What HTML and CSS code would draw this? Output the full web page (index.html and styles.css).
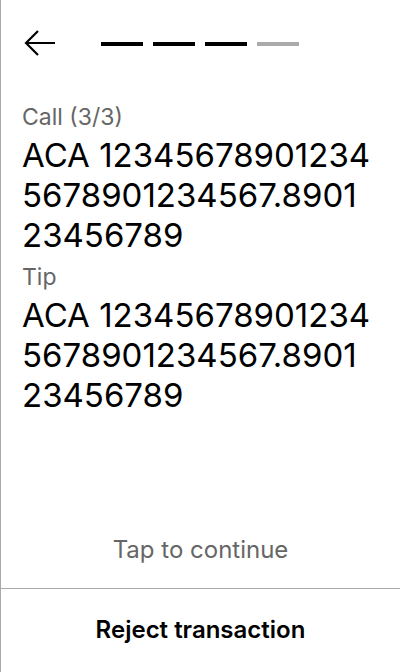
FILE: index.html
```html
<!DOCTYPE html>
<html>
<head>
<meta charset="utf-8">
<link rel="stylesheet" href="styles.css">
</head>
<body>
<div class="screen">
  <div class="header">
    <svg class="back" width="34" height="30" viewBox="0 0 34 30">
      <path d="M32 14H3M15 2L3 14L15 26" fill="none" stroke="#000" stroke-width="2.2"/>
    </svg>
    <div class="steps">
      <span class="step done"></span>
      <span class="step done"></span>
      <span class="step done"></span>
      <span class="step"></span>
    </div>
  </div>
  <div class="content">
    <div class="label">Call (3/3)</div>
    <div class="value">ACA 12345678901234 5678901234567.8901 23456789</div>
    <div class="label">Tip</div>
    <div class="value">ACA 12345678901234 5678901234567.8901 23456789</div>
  </div>
  <div class="tap">Tap to continue</div>
  <div class="reject">Reject transaction</div>
</div>
</body>
</html>
```
FILE: styles.css
```css
html, body {
  margin: 0;
  padding: 0;
  background: #fff;
}
body {
  font-family: Inter, "Noto Sans", sans-serif;
  color: #000;
}
.screen {
  width: 399px;
  height: 672px;
  border-left: 1px solid #aaa;
  display: flex;
  flex-direction: column;
}
.header {
  display: flex;
  align-items: center;
  padding: 29px 0 0 22px;
  height: 30px;
}
.back {
  display: block;
  margin-right: 44px;
}
.steps {
  display: flex;
  gap: 10px;
}
.step {
  width: 42px;
  height: 4px;
  background: #aaa;
}
.step.done {
  background: #000;
}
.content {
  padding: 44px 16px 0 21px;
  flex: 1;
}
.label {
  font-size: 23px;
  line-height: 28px;
  color: #666;
  margin-bottom: 4px;
}
.value {
  font-size: 33px;
  line-height: 40px;
  margin-bottom: 8px;
}
.tap {
  text-align: center;
  font-size: 24px;
  line-height: 28px;
  color: #666;
  padding-bottom: 24px;
  border-bottom: 1px solid #aaa;
}
.reject {
  text-align: center;
  font-size: 24px;
  font-weight: 600;
  line-height: 28px;
  padding: 27px 0 28px;
}
```
